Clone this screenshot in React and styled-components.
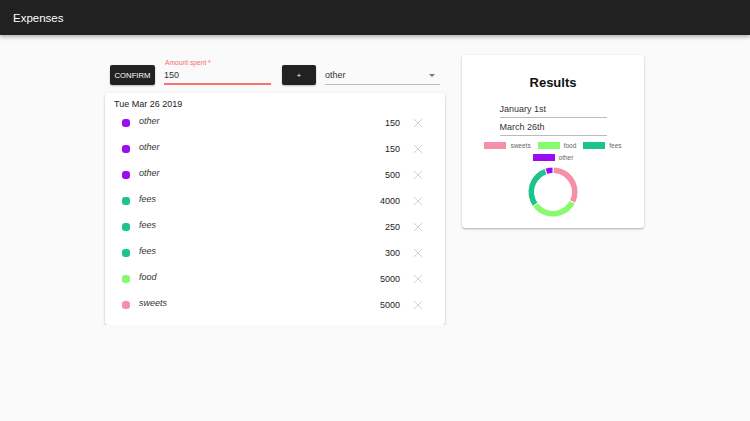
import React from 'react';
import styled, { createGlobalStyle } from 'styled-components';

const GlobalStyle = createGlobalStyle`
    html, body {
        margin: 0;
        padding: 0;
        background: #fafafa;
        font-family: "Liberation Sans", Arial, sans-serif;
        color: #222;
    }
`

const COLORS = {
    sweets: '#f68fa8',
    food: '#86fb6e',
    fees: '#1cc38d',
    other: '#9a0cf4',
}

const expenses = [
    { category: 'other', amount: 150 },
    { category: 'other', amount: 150 },
    { category: 'other', amount: 500 },
    { category: 'fees', amount: 4000 },
    { category: 'fees', amount: 250 },
    { category: 'fees', amount: 300 },
    { category: 'food', amount: 5000 },
    { category: 'sweets', amount: 5000 },
]

const Header = styled.header`
    height: 35px;
    background: #212121;
    color: #fff;
    display: flex;
    align-items: center;
    padding-left: 13px;
    font-size: 11.5px;
    box-shadow: 0 2px 4px rgba(0, 0, 0, 0.3);
    position: relative;
`

const Main = styled.main`
    display: flex;
    justify-content: center;
    align-items: flex-start;
    gap: 17px;
    padding-top: 20px;
    padding-right: 1px;
`

const LeftColumn = styled.div`
    width: 340px;
    display: flex;
    flex-direction: column;
`

const Controls = styled.div`
    display: flex;
    align-items: flex-end;
    height: 30px;
    padding-left: 5px;
`

const DarkButton = styled.button`
    width: ${p => p.width}px;
    height: 20px;
    margin-right: ${p => p.gap}px;
    background: #212121;
    color: #fff;
    border: none;
    border-radius: 2px;
    font-family: inherit;
    font-size: 7.7px;
    padding: 0;
    box-shadow: 0 1px 2px rgba(0, 0, 0, 0.25);
`

const Field = styled.div`
    width: ${p => p.width}px;
    margin-right: ${p => p.gap || 0}px;
    display: flex;
    flex-direction: column;
`

const FieldLabel = styled.label`
    color: #f26d6d;
    font-size: 6.7px;
    height: 9px;
    line-height: 9px;
    padding-left: 1px;
`

const FieldValue = styled.div`
    font-size: 9px;
    height: 18px;
    line-height: 18px;
    box-sizing: border-box;
    border-bottom: ${p => p.active ? '2px solid #f47272' : '1px solid #bdbdbd'};
    display: flex;
    justify-content: space-between;
    align-items: center;
    color: #333;
    padding-bottom: ${p => p.active ? 0 : 1}px;
`

const Caret = styled.span`
    width: 0;
    height: 0;
    border-left: 3.5px solid transparent;
    border-right: 3.5px solid transparent;
    border-top: 3.5px solid #777;
    margin-right: 5px;
`

const Card = styled.div`
    background: #fff;
    border-radius: 3px;
    box-shadow: 0 1px 3px rgba(0, 0, 0, 0.2), 0 1px 1px rgba(0, 0, 0, 0.12);
`

const ListCard = styled(Card)`
    margin-top: 8px;
    padding: 5px 0 7px;
`

const DateLine = styled.div`
    font-size: 9px;
    line-height: 12px;
    padding-left: 9px;
`

const Row = styled.div`
    height: 26px;
    display: flex;
    align-items: center;
    padding-left: 17px;
    padding-right: 22px;
`

const Dot = styled.span`
    width: 8px;
    height: 8px;
    border-radius: 3px;
    background: ${p => p.color};
    flex-shrink: 0;
`

const Category = styled.span`
    font-style: italic;
    font-size: 9px;
    margin-left: 9px;
    flex: 1;
    padding-bottom: 4px;
    color: #333;
`

const Amount = styled.span`
    font-size: 9px;
    color: #222;
`

const Remove = styled.span`
    display: flex;
    margin-left: 13px;
`

const ResultsCard = styled(Card)`
    width: 182px;
    padding: 19px 0 10px;
    display: flex;
    flex-direction: column;
    align-items: center;
`

const Title = styled.h2`
    margin: 0 0 8px;
    font-size: 13px;
    line-height: 18px;
    font-weight: bold;
    color: #111;
`

const DateInput = styled.div`
    width: 107px;
    height: 18px;
    box-sizing: border-box;
    border-bottom: 1px solid #bbb;
    font-size: 9px;
    line-height: 18px;
    color: #333;
`

const Legend = styled.div`
    display: flex;
    flex-wrap: wrap;
    justify-content: center;
    column-gap: 7px;
    row-gap: 4px;
    width: 160px;
    margin-top: 5px;
`

const LegendItem = styled.span`
    display: flex;
    align-items: center;
    font-size: 6.5px;
    color: #666;
    height: 8px;
`

const Swatch = styled.span`
    width: 22px;
    height: 7px;
    background: ${p => p.color};
    margin-right: 4px;
`

const ChartBox = styled.div`
    margin-top: 5px;
    width: 52px;
    height: 52px;
`

const CloseIcon = () => (
    <svg width="10" height="10" viewBox="0 0 10 10">
        <path d="M1 1 L9 9 M9 1 L1 9" stroke="#d0d0d0" strokeWidth="1" />
    </svg>
)

const arc = (cx, cy, r0, r1, a0, a1) => {
    const p = (r, a) => [cx + r * Math.cos(a), cy + r * Math.sin(a)]
    const large = a1 - a0 > Math.PI ? 1 : 0
    const [x1, y1] = p(r1, a0)
    const [x2, y2] = p(r1, a1)
    const [x3, y3] = p(r0, a1)
    const [x4, y4] = p(r0, a0)
    return `M${x1} ${y1} A${r1} ${r1} 0 ${large} 1 ${x2} ${y2} L${x3} ${y3} A${r0} ${r0} 0 ${large} 0 ${x4} ${y4} Z`
}

const Donut = ({ data }) => {
    const total = data.reduce((s, d) => s + d.value, 0)
    let angle = -Math.PI / 2
    return (
        <svg width="52" height="52" viewBox="0 0 52 52">
            {data.map(d => {
                const next = angle + (d.value / total) * Math.PI * 2
                const path = arc(26, 26, 18.5, 25, angle, next)
                angle = next
                return <path key={d.label} d={path} fill={d.color} stroke="#fff" strokeWidth="1" />
            })}
        </svg>
    )
}

const App = () => {
    const totals = ['sweets', 'food', 'fees', 'other'].map(label => ({
        label,
        color: COLORS[label],
        value: expenses.filter(e => e.category === label).reduce((s, e) => s + e.amount, 0),
    }))

    return (
        <>
            <GlobalStyle />
            <Header>Expenses</Header>
            <Main>
                <LeftColumn>
                    <Controls>
                        <DarkButton width={45} gap={9}>CONFIRM</DarkButton>
                        <Field width={107} gap={11}>
                            <FieldLabel>Amount spent *</FieldLabel>
                            <FieldValue active>150</FieldValue>
                        </Field>
                        <DarkButton width={34} gap={9}>+</DarkButton>
                        <Field width={115}>
                            <FieldValue>
                                other
                                <Caret />
                            </FieldValue>
                        </Field>
                    </Controls>
                    <ListCard>
                        <DateLine>Tue Mar 26 2019</DateLine>
                        {expenses.map((e, i) => (
                            <Row key={i}>
                                <Dot color={COLORS[e.category]} />
                                <Category>{e.category}</Category>
                                <Amount>{e.amount}</Amount>
                                <Remove><CloseIcon /></Remove>
                            </Row>
                        ))}
                    </ListCard>
                </LeftColumn>
                <ResultsCard>
                    <Title>Results</Title>
                    <DateInput>January 1st</DateInput>
                    <DateInput>March 26th</DateInput>
                    <Legend>
                        {totals.map(t => (
                            <LegendItem key={t.label}>
                                <Swatch color={t.color} />
                                {t.label}
                            </LegendItem>
                        ))}
                    </Legend>
                    <ChartBox>
                        <Donut data={totals} />
                    </ChartBox>
                </ResultsCard>
            </Main>
        </>
    )
}

export default App
